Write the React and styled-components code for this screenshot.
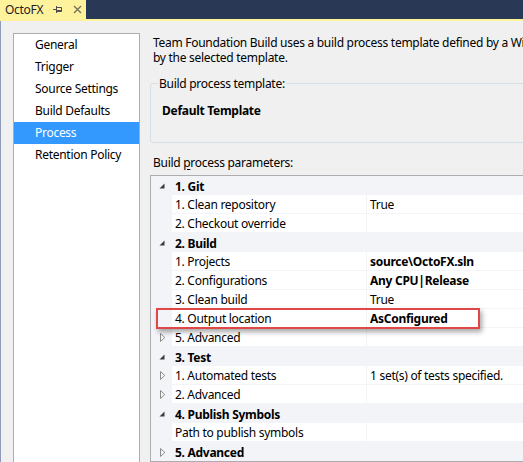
import React from 'react';
import styled, { createGlobalStyle } from 'styled-components';

const FONT = `"Noto Sans", "Open Sans", sans-serif`;

const GlobalStyle = createGlobalStyle`
  html, body { margin: 0; padding: 0; background: #F0F0F0; overflow: hidden; }
  body { font-family: ${FONT}; font-size: 12px; color: #000; letter-spacing: -0.28px; }
  #root { width: 523px; height: 462px; overflow: hidden; }
`;

const Window = styled.div`
  width: 523px;
  height: 462px;
  display: flex;
  flex-direction: column;
  overflow: hidden;
`;

const TabStrip = styled.div`
  display: flex;
  height: 19px;
  flex-shrink: 0;
  background: #293955;
  border-bottom: 2px solid #FFF29D;
`;

const Tab = styled.div`
  display: flex;
  align-items: center;
  width: 86px;
  box-sizing: border-box;
  padding-left: 5px;
  background: #FFF29D;
  color: #1E1E1E;
`;

const TabTitle = styled.span`
  width: 48px;
  line-height: 19px;
`;

const TabIcon = styled.svg`
  display: block;
  flex-shrink: 0;
  margin-left: ${(p) => p.$gap || 0}px;
`;

const Body = styled.div`
  flex: 1;
  display: flex;
  min-height: 0;
  border-left: 1px solid #8E9BBC;
`;

const Sidebar = styled.div`
  width: 139px;
  flex-shrink: 0;
  box-sizing: border-box;
  padding: 12px 0 0 12px;
`;

const NavList = styled.ul`
  list-style: none;
  margin: 0;
  padding: 0;
  height: 600px;
  background: #fff;
  border: 1px solid #ABADB3;
`;

const NavItem = styled.li`
  height: 22px;
  line-height: 22px;
  padding-left: 21px;
  white-space: nowrap;
  background: ${(p) => (p.$active ? '#3399FF' : 'transparent')};
  color: ${(p) => (p.$active ? '#fff' : '#000')};
`;

const Main = styled.div`
  flex: 1;
  min-width: 0;
  display: flex;
  flex-direction: column;
  padding: 14px 0 0 10px;
  overflow: hidden;
`;

const Description = styled.div`
  padding-left: 3px;
  line-height: 15px;
  white-space: nowrap;
  overflow: hidden;
  span { display: block; height: 15px; }
`;

const GroupBox = styled.fieldset`
  margin: 11px 0 0 0;
  padding: 0 0 24px 11px;
  width: 600px;
  min-width: 0;
  flex-shrink: 0;
  box-sizing: border-box;
  border: 1px solid #D5DFE5;
  border-radius: 3px;
`;

const Legend = styled.legend`
  margin-left: -4px;
  padding: 0 1px;
  line-height: 15px;
`;

const TemplateName = styled.div`
  margin-top: 12px;
  line-height: 15px;
  font-weight: 700;
`;

const SectionLabel = styled.div`
  margin-top: 12px;
  padding-left: 3px;
  line-height: 15px;
  u { text-decoration: underline; text-underline-offset: 2px; }
`;

const PropGrid = styled.div`
  position: relative;
  margin-top: 5px;
  width: 600px;
  flex-shrink: 0;
  background: #F2F4F8;
  border: 1px solid #ABADB3;
  border-right: none;
`;

const Row = styled.div`
  display: flex;
  height: 19px;
`;

const Gutter = styled.div`
  width: 21px;
  flex-shrink: 0;
  display: flex;
  align-items: center;
  padding-left: ${(p) => (p.$collapsed ? 9 : 8)}px;
  padding-top: 1px;
  box-sizing: border-box;
  height: ${(p) => (p.$category ? 19 : 18)}px;
`;

const NameCell = styled.div`
  width: 194px;
  flex-shrink: 0;
  height: 18px;
  line-height: 20px;
  padding-left: 3px;
  box-sizing: border-box;
  white-space: nowrap;
  overflow: hidden;
  background: #fff;
`;

const ValueCell = styled.div`
  flex: 1;
  margin-left: 1px;
  height: 18px;
  line-height: 20px;
  padding-left: 3px;
  white-space: nowrap;
  overflow: hidden;
  background: #fff;
  font-weight: ${(p) => (p.$bold ? 700 : 400)};
`;

const CategoryTitle = styled.div`
  flex: 1;
  padding-left: 3px;
  line-height: 21px;
  height: 19px;
  font-weight: 700;
  white-space: nowrap;
  overflow: hidden;
`;

const Highlight = styled.div`
  position: absolute;
  left: 5px;
  top: 132px;
  width: 324px;
  height: 21px;
  box-sizing: border-box;
  border: 2px solid #E04848;
  box-shadow: 2px 3px 5px rgba(0, 0, 0, 0.35);
  pointer-events: none;
`;

const ExpandedIcon = () => (
  <svg width="6" height="6" viewBox="0 0 6 6" style={{ display: 'block' }}>
    <polygon points="5.5,0.5 5.5,5.5 0.5,5.5" fill="#3C3C3C" />
  </svg>
);

const CollapsedIcon = () => (
  <svg width="6" height="9" viewBox="0 0 6 9" style={{ display: 'block' }}>
    <polygon points="0.5,0.5 4.8,4.5 0.5,8.5" fill="none" stroke="#8C8C8C" strokeWidth="1" />
  </svg>
);

const navItems = ['General', 'Trigger', 'Source Settings', 'Build Defaults', 'Process', 'Retention Policy'];

const rows = [
  { type: 'cat', label: '1. Git' },
  { type: 'item', label: '1. Clean repository', value: 'True' },
  { type: 'item', label: '2. Checkout override', value: '' },
  { type: 'cat', label: '2. Build' },
  { type: 'item', label: '1. Projects', value: 'source\\OctoFX.sln', bold: true },
  { type: 'item', label: '2. Configurations', value: 'Any CPU|Release', bold: true },
  { type: 'item', label: '3. Clean build', value: 'True' },
  { type: 'item', label: '4. Output location', value: 'AsConfigured', bold: true },
  { type: 'item', label: '5. Advanced', value: '', collapsed: true },
  { type: 'cat', label: '3. Test' },
  { type: 'item', label: '1. Automated tests', value: '1 set(s) of tests specified.', collapsed: true },
  { type: 'item', label: '2. Advanced', value: '', collapsed: true },
  { type: 'cat', label: '4. Publish Symbols' },
  { type: 'item', label: 'Path to publish symbols', value: '' },
  { type: 'cat', label: '5. Advanced', collapsed: true },
];

export default function App() {
  return (
    <>
      <GlobalStyle />
      <Window>
        <TabStrip>
          <Tab>
            <TabTitle>OctoFX</TabTitle>
            <TabIcon width="9" height="7" viewBox="0 0 9 7">
              <path d="M0 3.5H3 M3.5 0V7 M3.5 1.5H8.5V5.5H3.5 M3.5 4.5H8.5" stroke="#4D4D4D" strokeWidth="1" fill="none" />
            </TabIcon>
            <TabIcon $gap={11} width="9" height="9" viewBox="0 0 9 9">
              <path d="M1 1L8 8M8 1L1 8" stroke="#75715E" strokeWidth="1.4" fill="none" />
            </TabIcon>
          </Tab>
        </TabStrip>
        <Body>
          <Sidebar>
            <NavList>
              {navItems.map((n) => (
                <NavItem key={n} $active={n === 'Process'}>{n}</NavItem>
              ))}
            </NavList>
          </Sidebar>
          <Main>
            <Description>
              <span>Team Foundation Build uses a build process template defined by a Windows Workflow (XAML) file.</span>
              <span>by the selected template.</span>
            </Description>
            <GroupBox>
              <Legend>Build process template:</Legend>
              <TemplateName>Default Template</TemplateName>
            </GroupBox>
            <SectionLabel>Build <u>p</u>rocess parameters:</SectionLabel>
            <PropGrid>
              {rows.map((r, i) =>
                r.type === 'cat' ? (
                  <Row key={i}>
                    <Gutter $category $collapsed={r.collapsed}>
                      {r.collapsed ? <CollapsedIcon /> : <ExpandedIcon />}
                    </Gutter>
                    <CategoryTitle>{r.label}</CategoryTitle>
                  </Row>
                ) : (
                  <Row key={i}>
                    <Gutter $collapsed={r.collapsed}>{r.collapsed ? <CollapsedIcon /> : null}</Gutter>
                    <NameCell>{r.label}</NameCell>
                    <ValueCell $bold={r.bold}>{r.value}</ValueCell>
                  </Row>
                )
              )}
              <Highlight />
            </PropGrid>
          </Main>
        </Body>
      </Window>
    </>
  );
}
